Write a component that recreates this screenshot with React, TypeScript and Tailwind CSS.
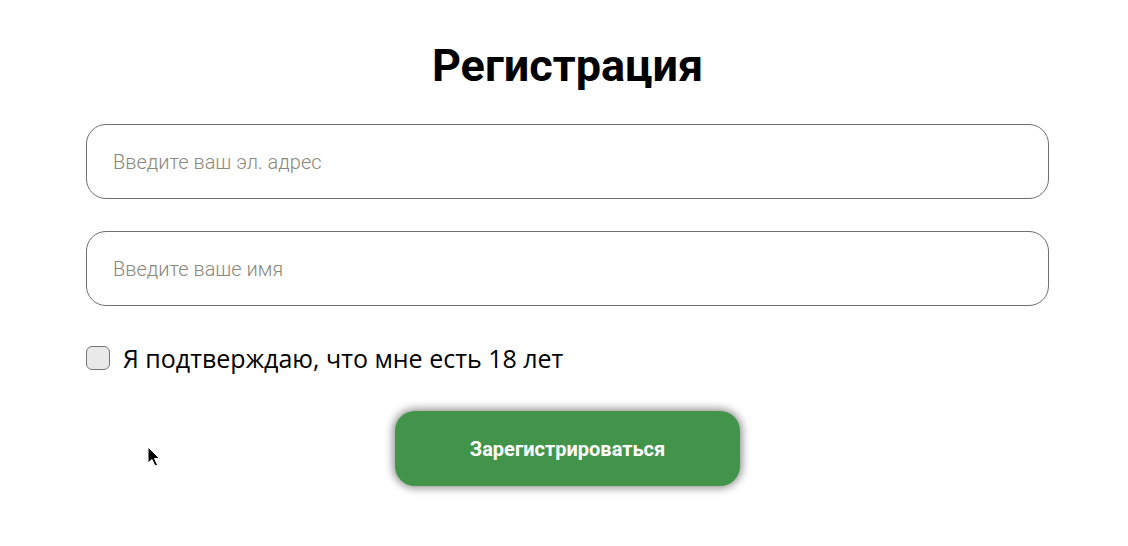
import { useState } from 'react'

export default function App() {
  const [email, setEmail] = useState('')
  const [name, setName] = useState('')
  const [adult, setAdult] = useState(false)

  return (
    <div className="relative min-h-[546px] w-full bg-white font-['Roboto',sans-serif]">
      <form
        className="flex flex-col pl-[86px] pr-[79px] pt-[38px]"
        onSubmit={(event) => event.preventDefault()}
      >
        <h1 className="text-center text-[45px] font-bold leading-[56px] text-black">Регистрация</h1>

        <input
          className="mt-[30px] h-[75px] w-full rounded-[20px] border border-[#6f6f6f] bg-white px-[26px] text-[20px] font-light text-black outline-none placeholder:text-[#8a887c]"
          onChange={(event) => setEmail(event.target.value)}
          placeholder="Введите ваш эл. адрес"
          type="email"
          value={email}
        />
        <input
          className="mt-[32px] h-[75px] w-full rounded-[20px] border border-[#6f6f6f] bg-white px-[26px] text-[20px] font-light text-black outline-none placeholder:text-[#8a887c]"
          onChange={(event) => setName(event.target.value)}
          placeholder="Введите ваше имя"
          type="text"
          value={name}
        />

        <label className="mt-[36px] flex cursor-pointer items-center gap-[13px] font-['Open_Sans',sans-serif] text-[25px] leading-[32px] text-black">
          <span
            className={
              adult
                ? 'flex h-[24px] w-[24px] shrink-0 items-center justify-center rounded-[6px] border border-[#767676] bg-[#43944b]'
                : 'flex h-[24px] w-[24px] shrink-0 items-center justify-center rounded-[6px] border border-[#767676] bg-[#e9e9e9]'
            }
          >
            {adult ? (
              <svg className="h-4 w-4" fill="none" stroke="white" strokeWidth="3" viewBox="0 0 24 24">
                <path d="M5 12l5 5L20 7" />
              </svg>
            ) : null}
          </span>
          <input
            checked={adult}
            className="sr-only"
            onChange={(event) => setAdult(event.target.checked)}
            type="checkbox"
          />
          Я подтверждаю, что мне есть 18 лет
        </label>

        <div className="mt-[37px] flex justify-center">
          <button
            className="h-[75px] w-[345px] rounded-[20px] bg-[#43944b] text-[20px] font-bold text-white shadow-[0_0_8px_2px_rgba(0,0,0,0.45)]"
            type="submit"
          >
            Зарегистрироваться
          </button>
        </div>
      </form>

      {/* mouse pointer captured in the screenshot */}
      <svg className="pointer-events-none absolute left-[147px] top-[446px]" height="24" viewBox="0 0 16 24" width="16">
        <path d="M1 1 L1 17 L5 13.5 L8 20 L10.5 19 L7.5 12.5 L12.5 12.5 Z" fill="black" stroke="white" strokeWidth="1" />
      </svg>
    </div>
  )
}
